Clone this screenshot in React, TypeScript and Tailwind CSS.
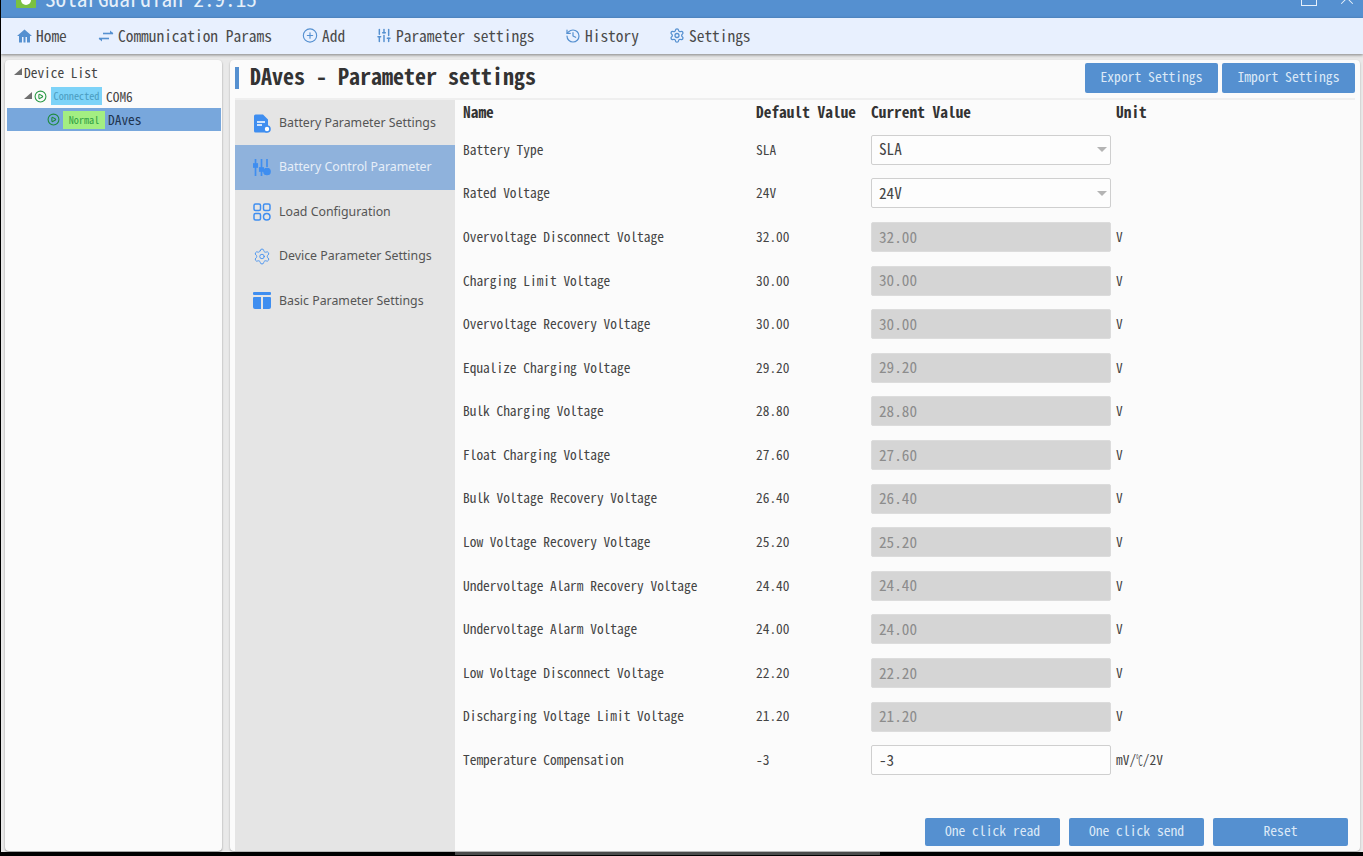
import React from "react";
import { CirclePlus, SlidersVertical, History, Settings, CirclePlay, X } from "lucide-react";

const mono = "font-['Noto_Sans_Mono_CJK_SC','Liberation_Mono',monospace]";

function HomeIcon() {
  return (
    <svg width="15" height="14" viewBox="0 0 15 14" fill="#5590d0">
      <path d="M7.5 0.5 L15 7 H13 V13.5 H10 V8 H8.5 V13.5 H6.5 V8 H5 V13.5 H2 V7 H0 Z" />
    </svg>
  );
}
function SwapIcon() {
  return (
    <svg width="16" height="12" viewBox="0 0 16 12" fill="none" stroke="#5590d0" strokeWidth="1.6">
      <path d="M5 3.5 H15" />
      <path d="M12 0.5 L15.5 3.5 H12 Z" fill="#5590d0" stroke="none" />
      <path d="M1 8.5 H11" />
      <path d="M4 11.5 L0.5 8.5 H4 Z" fill="#5590d0" stroke="none" />
    </svg>
  );
}
function Corner() {
  return (
    <svg width="8" height="8" viewBox="0 0 8 8" fill="#707070">
      <polygon points="8,0 8,7 0,7" />
    </svg>
  );
}
function DocIcon() {
  return (
    <svg width="18" height="19" viewBox="0 0 18 19">
      <path d="M2.5 0.5 H10 L15 5.5 V17 A1.5 1.5 0 0 1 13.5 18.5 H2.5 A1.5 1.5 0 0 1 1 17 V2 A1.5 1.5 0 0 1 2.5 0.5 Z" fill="#3f8ef0" />
      <path d="M4 8 H12 M4 11 H9" stroke="#fff" strokeWidth="1.3" />
      <circle cx="14" cy="15" r="3" fill="#fff" stroke="#3f8ef0" strokeWidth="1.6" />
    </svg>
  );
}
function ControlIcon() {
  return (
    <svg width="18" height="17" viewBox="0 0 18 17" fill="none" stroke="#3f8ef0" strokeWidth="1.7">
      <path d="M2.5 0 V17 M8.5 0 V17 M14 0 V8" />
      <rect x="0.8" y="5" width="3.4" height="3" fill="#3f8ef0" />
      <rect x="6.8" y="9" width="3.4" height="3" fill="#3f8ef0" />
      <circle cx="14" cy="12.5" r="3" fill="#3f8ef0" />
    </svg>
  );
}
function GridIcon() {
  return (
    <svg width="18" height="18" viewBox="0 0 18 18" fill="none" stroke="#3f8ef0" strokeWidth="1.5">
      <rect x="1" y="1" width="6.5" height="6.5" rx="1.5" />
      <rect x="10.5" y="1" width="6.5" height="6.5" rx="1.5" />
      <rect x="1" y="10.5" width="6.5" height="6.5" rx="1.5" />
      <circle cx="13.75" cy="13.75" r="3.25" />
    </svg>
  );
}
function TableIcon() {
  return (
    <svg width="18" height="17" viewBox="0 0 18 17" fill="#3f8ef0">
      <rect x="0" y="0" width="18" height="3" rx="1" />
      <path d="M0 6 A1 1 0 0 1 1 5 H8 V17 H2 A2 2 0 0 1 0 15 Z" />
      <path d="M10 5 H17 A1 1 0 0 1 18 6 V15 A2 2 0 0 1 16 17 H10 Z" />
    </svg>
  );
}

const nav = [
  { icon: <HomeIcon />, label: "Home", w: "w-[81px]" },
  { icon: <SwapIcon />, label: "Communication Params", w: "w-[205px]" },
  { icon: <CirclePlus size={17} color="#5590d0" strokeWidth={1.7} />, label: "Add", w: "w-[74px]" },
  { icon: <SlidersVertical size={17} color="#5590d0" strokeWidth={2.2} />, label: "Parameter settings", w: "w-[189px]" },
  { icon: <History size={16} color="#5590d0" strokeWidth={1.8} />, label: "History", w: "w-[104px]" },
  { icon: <Settings size={17} color="#5590d0" strokeWidth={1.9} />, label: "Settings", w: "w-[100px]" },
];

const side = [
  { icon: <DocIcon />, label: "Battery Parameter Settings" },
  { icon: <ControlIcon />, label: "Battery Control Parameter", active: true },
  { icon: <GridIcon />, label: "Load Configuration" },
  { icon: <Settings size={21} color="#3f8ef0" strokeWidth={1.2} />, label: "Device Parameter Settings" },
  { icon: <TableIcon />, label: "Basic Parameter Settings" },
];

type Row = { name: string; def: string; unit?: React.ReactNode; kind: "select" | "off" | "on" };
const rows: Row[] = [
  { name: "Battery Type", def: "SLA", kind: "select" },
  { name: "Rated Voltage", def: "24V", kind: "select" },
  { name: "Overvoltage Disconnect Voltage", def: "32.00", unit: "V", kind: "off" },
  { name: "Charging Limit Voltage", def: "30.00", unit: "V", kind: "off" },
  { name: "Overvoltage Recovery Voltage", def: "30.00", unit: "V", kind: "off" },
  { name: "Equalize Charging Voltage", def: "29.20", unit: "V", kind: "off" },
  { name: "Bulk Charging Voltage", def: "28.80", unit: "V", kind: "off" },
  { name: "Float Charging Voltage", def: "27.60", unit: "V", kind: "off" },
  { name: "Bulk Voltage Recovery Voltage", def: "26.40", unit: "V", kind: "off" },
  { name: "Low Voltage Recovery Voltage", def: "25.20", unit: "V", kind: "off" },
  { name: "Undervoltage Alarm Recovery Voltage", def: "24.40", unit: "V", kind: "off" },
  { name: "Undervoltage Alarm Voltage", def: "24.00", unit: "V", kind: "off" },
  { name: "Low Voltage Disconnect Voltage", def: "22.20", unit: "V", kind: "off" },
  { name: "Discharging Voltage Limit Voltage", def: "21.20", unit: "V", kind: "off" },
  {
    name: "Temperature Compensation",
    def: "-3",
    unit: (
      <>
        mV/<span className="inline-block w-[6.7px] scale-x-50 origin-left">℃</span>/2V
      </>
    ),
    kind: "on",
  },
];

function Value({ r }: { r: Row }) {
  if (r.kind === "off") {
    return (
      <div className="w-[240px] h-[30px] mt-[2px] flex items-center pl-[7px] pb-[2px] rounded-[2px] bg-[#d5d5d5] border border-[#dcdcdc] text-[#8c8c8c] text-[15.2px]">
        {r.def}
      </div>
    );
  }
  return (
    <div className="w-[240px] h-[30px] mt-[2px] flex items-center justify-between pl-[7px] pr-[3px] pb-[2px] rounded-[2px] bg-[#fdfdfd] border border-[#cfcfcf] text-[#444] text-[15.2px]">
      <span>{r.def}</span>
      {r.kind === "select" && <span className="w-0 h-0 mt-[2px] border-x-[5px] border-x-transparent border-t-[5px] border-t-[#b4b4b4]" />}
    </div>
  );
}

function Btn({ label, w, h }: { label: string; w: string; h: string }) {
  return (
    <div className={`${w} ${h} flex items-center justify-center pb-[3px] rounded-[2px] bg-[#5590d0] text-[#dce9f7] text-[13.6px]`}>
      {label}
    </div>
  );
}

export default function App() {
  return (
    <div className={`w-[1363px] h-[856px] overflow-hidden flex flex-col bg-black ${mono}`}>
      <div className="h-[852px] shrink-0 flex flex-col bg-[#e9e9e9] ml-px">
        <div className="h-[18px] shrink-0 overflow-hidden flex items-start justify-between bg-[#5590d0]">
          <div className="flex items-start pl-[15px] h-[18px]">
            <div className="w-[20px] h-[8px] bg-[#7ac142] rounded-b-[1px] flex justify-center">
              <div className="w-[10px] h-[5px] bg-white rounded-b-full" />
            </div>
            <span className="ml-[9px] text-[#e6f0fa] text-[21.2px] leading-[18px] mt-[-11px] whitespace-nowrap">SolarGuardian 2.9.15</span>
          </div>
          <div className="flex items-start">
            <div className="w-[16px] h-[6px] border-x border-b border-[#e6f0fa] mr-[19px]" />
            <X size={22} color="#e6f0fa" strokeWidth={1.1} className="mr-[5px] mt-[-13px]" />
          </div>
        </div>

        <div className="h-[36px] shrink-0 flex items-center pl-[15px] bg-[#e8f0fe] shadow-[0_1px_3px_rgba(0,0,0,0.45)] relative text-[#4a4a4a] text-[15.4px]">
          {nav.map((n, i) => (
            <div key={n.label} className={`${n.w} flex items-center gap-[4px] shrink-0 ${i === 1 ? "pl-[1px]" : ""}`}>
              <span className="w-[16px] flex justify-center shrink-0">{n.icon}</span>
              <span>{n.label}</span>
            </div>
          ))}
        </div>

        <div className="flex-1 min-h-0 flex gap-[8px] pl-[4px] pr-[3px] pt-[6px] pb-[1px]">
          <div className="w-[217px] shrink-0 rounded-[4px] bg-[#fbfbfb] shadow-[0_1px_2px_rgba(0,0,0,0.4)] pt-[4px] pl-[2px] pr-[1px] text-[#444] text-[13.4px]">
            <div className="h-[20px] flex items-center pl-[7px] pb-[4px] gap-[2px]">
              <Corner />
              <span>Device List</span>
            </div>
            <div className="h-[24px] flex items-center pl-[17px] gap-[2px]">
              <Corner />
              <CirclePlay size={13} color="#2a9a45" strokeWidth={2} />
              <span className="ml-[2px] w-[51px] h-[18px] flex items-center justify-center bg-[#7dd3f8] text-[#4a9cc0] text-[10.2px]">Connected</span>
              <span className="ml-[2px]">COM6</span>
            </div>
            <div className="h-[23px] flex items-center pl-[40px] bg-[#78a7dc] text-[#1f3550]">
              <CirclePlay size={13} color="#1f8a3e" strokeWidth={2} />
              <span className="ml-[3px] w-[42px] h-[18px] flex items-center justify-center bg-[#a3ee82] text-[#2f9e44] text-[10.2px]">Normal</span>
              <span className="ml-[3px]">DAves</span>
            </div>
          </div>

          <div className="flex-1 min-w-0 rounded-[4px] bg-[#fbfbfb] shadow-[0_1px_2px_rgba(0,0,0,0.3)] flex flex-col overflow-hidden">
            <div className="h-[40px] shrink-0 flex items-center mx-[5px] pb-[2px] border-b-2 border-[#efefef]">
              <div className="w-[4px] h-[22px] bg-[#5590d0] mr-[11px]" />
              <span className="flex-1 font-bold text-[#333] text-[22px] leading-[24px] pb-[7px]">DAves - Parameter settings</span>
              <div className="flex gap-[4px]">
                <Btn label="Export Settings" w="w-[133px]" h="h-[30px]" />
                <Btn label="Import Settings" w="w-[133px]" h="h-[30px]" />
              </div>
            </div>

            <div className="flex-1 min-h-0 flex ml-[5px]">
              <div className="w-[220px] shrink-0 bg-[#e5e5e5] font-['Noto_Sans',sans-serif] text-[12.35px]">
                <div className="h-[1px]" />
                {side.map((s) => (
                  <div key={s.label} className={`h-[44.4px] flex items-center pl-[18px] gap-[8px] ${s.active ? "bg-[#8fb2dc] text-[#e6eef8]" : "text-[#555]"}`}>
                    <span className="w-[18px] flex justify-center shrink-0">{s.icon}</span>
                    <span>{s.label}</span>
                  </div>
                ))}
              </div>

              <div className="flex-1 min-w-0 flex flex-col pl-[8px] pr-[12px]">
                <div className="h-[26px] shrink-0 grid grid-cols-[293px_115px_245px_1fr] items-center pb-[2px] font-bold text-[#333] text-[15.4px]">
                  <span>Name</span>
                  <span>Default Value</span>
                  <span>Current Value</span>
                  <span>Unit</span>
                </div>
                <div className="pt-[1px] text-[#444] text-[13.4px]">
                  {rows.map((r) => (
                    <div key={r.name} className="h-[43.6px] grid grid-cols-[293px_115px_245px_1fr] items-center">
                      <span>{r.name}</span>
                      <span>{r.def}</span>
                      <Value r={r} />
                      <span>{r.unit}</span>
                    </div>
                  ))}
                </div>
                <div className="flex-1" />
                <div className="flex justify-end gap-[9px] pb-[5px]">
                  <Btn label="One click read" w="w-[135px]" h="h-[28px]" />
                  <Btn label="One click send" w="w-[135px]" h="h-[28px]" />
                  <Btn label="Reset" w="w-[135px]" h="h-[28px]" />
                </div>
              </div>
            </div>
          </div>
        </div>
      </div>
      <div className="h-[3px] w-[425px] ml-[455px] shrink-0 bg-[#4c4c4c]" />
    </div>
  );
}
